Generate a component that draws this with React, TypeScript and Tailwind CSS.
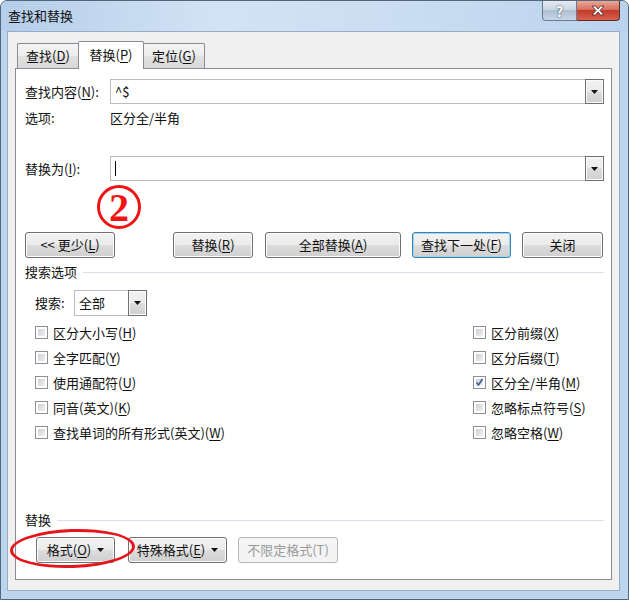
import React from 'react';

type Kids = { children?: React.ReactNode; className?: string };

const U = ({ children }: Kids) => (
  <span className="underline decoration-1 underline-offset-[2px]">{children}</span>
);

const Arrow = () => (
  <svg width="7" height="4" viewBox="0 0 7 4">
    <path d="M0 0h7L3.5 4z" fill="#111" />
  </svg>
);

const Combo = ({ children, className = '' }: Kids) => (
  <div className={`flex h-[25px] border border-[#bcbec6] bg-white ${className}`}>
    <div className="flex flex-1 items-center pl-[4px]">{children}</div>
    <div className="-my-px -mr-px flex w-[19px] items-center justify-center border border-[#707070] bg-[linear-gradient(#f2f2f2,#ebebeb_50%,#dddddd_50%,#cfcfcf)] shadow-[inset_0_0_0_1px_#fbfbfb]">
      <Arrow />
    </div>
  </div>
);

const Btn = ({
  children,
  className = '',
  variant = 'normal',
}: Kids & { variant?: 'normal' | 'default' | 'disabled' }) => {
  const look =
    variant === 'default'
      ? 'border-[#3c7fb1] bg-[linear-gradient(#f2f2f2,#ebebeb_50%,#dddddd_50%,#cfcfcf)] shadow-[inset_0_0_0_1px_#98d9f8]'
      : variant === 'disabled'
        ? 'border-[#b4b8bb] bg-[#f4f4f4] text-[#9a9a9a]'
        : 'border-[#707070] bg-[linear-gradient(#f2f2f2,#ebebeb_50%,#dddddd_50%,#cfcfcf)] shadow-[inset_0_0_0_1px_#fcfcfc]';
  return (
    <div className={`flex h-[26px] items-center justify-center gap-[6px] rounded-[3px] border ${look} ${className}`}>
      {children}
    </div>
  );
};

const Check = ({ children, checked = false }: Kids & { checked?: boolean }) => (
  <div className="flex h-[25px] items-center gap-[5px]">
    <span className="relative flex h-[13px] w-[13px] border border-[#8e8f8f] bg-white p-[2px]">
      <span className="h-full w-full bg-[linear-gradient(135deg,#cdd0d5,#f0f1f3)]" />
      {checked && (
        <svg className="absolute left-[1px] top-[1px]" width="9" height="9" viewBox="0 0 9 9">
          <path d="M1.5 4.5l2 2.5 4-6" fill="none" stroke="#3d5a9e" strokeWidth="1.6" />
        </svg>
      )}
    </span>
    <span>{children}</span>
  </div>
);

const Group = ({ children }: Kids) => (
  <div className="flex h-[16px] items-center gap-[6px]">
    <span>{children}</span>
    <span className="h-px flex-1 bg-[#d7e0e8]" />
  </div>
);

export default function App() {
  return (
    <div className="flex h-[600px] w-[629px] flex-col overflow-hidden rounded-t-[7px] border border-[#56667a] bg-[#bcd5ef] font-['Noto_Sans_CJK_SC','Liberation_Sans',sans-serif] text-[13px] leading-[16px] text-[#111]">
      {/* title bar */}
      <div className="flex h-[30px] shrink-0 items-start justify-between bg-[linear-gradient(90deg,#b5cee9,#d2e3f5_35%,#c8dcf1_70%,#bad3ed)]">
        <div className="pl-[7px] pt-[7px]">查找和替换</div>
        <div className="mr-[8px] flex">
          <div className="flex h-[20px] w-[35px] items-center justify-center rounded-bl-[4px] border border-t-0 border-[#6b7b8f] bg-[linear-gradient(#e4ebf3,#c9d5e2_50%,#aebfd2_50%,#c8d7e7)] text-[14px] font-bold text-white [text-shadow:0_0_2px_#1f2d40]">
            ?
          </div>
          <div className="flex h-[20px] w-[43px] items-center justify-center rounded-br-[4px] border border-l-0 border-t-0 border-[#5e2c25] bg-[linear-gradient(#e9a797,#d66a58_50%,#c23a2b_50%,#d8634e)]">
            <svg width="14" height="11" viewBox="0 0 14 11">
              <path
                d="M1 1h3.5L7 4l2.5-3H13L9 5.5 13 10H9.5L7 7l-2.5 3H1l4-4.5z"
                fill="#fff"
                stroke="#4a231d"
                strokeWidth="0.8"
              />
            </svg>
          </div>
        </div>
      </div>

      {/* client area */}
      <div className="ml-[6px] flex h-[560px] w-[613px] flex-col border border-[#9aacc2] bg-[#f0f0f0] px-[7px] pb-[10px] pt-[9px]">
        <div className="flex h-[27px] items-end">
          <div className="ml-[2px] flex h-[25px] w-[61px] items-center justify-center rounded-tl-[2px] border border-b-0 border-r-0 border-[#898c95] bg-[linear-gradient(#f4f4f4,#ececec_50%,#e2e2e2_50%,#d8d8d8)]">
            查找(<U>D</U>)
          </div>
          <div className="relative z-10 -mb-px flex h-[28px] w-[66px] items-center justify-center rounded-t-[2px] border border-b-0 border-[#898c95] bg-white pb-[2px]">
            替换(<U>P</U>)
          </div>
          <div className="flex h-[25px] w-[61px] items-center justify-center rounded-tr-[2px] border border-b-0 border-l-0 border-[#898c95] bg-[linear-gradient(#f4f4f4,#ececec_50%,#e2e2e2_50%,#d8d8d8)]">
            定位(<U>G</U>)
          </div>
        </div>

        <div className="flex flex-1 flex-col border border-[#898c95] bg-white pl-[9px] pr-[7px]">
          <div className="mt-[10px] flex h-[25px] items-center">
            <span className="w-[85px]">
              查找内容(<U>N</U>):
            </span>
            <Combo className="flex-1">^$</Combo>
          </div>
          <div className="mt-[6px] flex h-[16px] items-center">
            <span className="w-[85px]">选项:</span>
            <span>区分全/半角</span>
          </div>
          <div className="mt-[30px] flex h-[25px] items-center">
            <span className="w-[85px]">
              替换为(<U>I</U>):
            </span>
            <Combo className="flex-1">
              <span className="h-[15px] w-px bg-black" />
            </Combo>
          </div>

          <div className="ml-[72px] mt-[4px] flex h-[44px] w-[44px] items-center justify-center rounded-full border-[3px] border-[#f01414] pt-[2px] font-['Liberation_Serif',serif] text-[40px] font-bold leading-none text-[#f01414]">
            2
          </div>

          <div className="mt-[3px] flex">
            <Btn className="w-[90px]">
              <span>
                &lt;&lt; 更少(<U>L</U>)
              </span>
            </Btn>
            <Btn className="ml-[58px] w-[80px]">
              <span>
                替换(<U>R</U>)
              </span>
            </Btn>
            <Btn className="ml-[12px] w-[136px]">
              <span>
                全部替换(<U>A</U>)
              </span>
            </Btn>
            <Btn className="ml-[11px] w-[99px]" variant="default">
              <span>
                查找下一处(<U>F</U>)
              </span>
            </Btn>
            <Btn className="ml-[11px] w-[81px]">关闭</Btn>
          </div>

          <div className="mt-[6px]">
            <Group>搜索选项</Group>
          </div>

          <div className="mt-[10px] flex h-[26px] items-center pl-[10px]">
            <span className="w-[39px]">搜索:</span>
            <Combo className="h-[26px] w-[73px]">全部</Combo>
          </div>

          <div className="mt-[4px] flex">
            <div className="w-[448px] pl-[10px]">
              <Check>
                区分大小写(<U>H</U>)
              </Check>
              <Check>
                全字匹配(<U>Y</U>)
              </Check>
              <Check>
                使用通配符(<U>U</U>)
              </Check>
              <Check>
                同音(英文)(<U>K</U>)
              </Check>
              <Check>
                查找单词的所有形式(英文)(<U>W</U>)
              </Check>
            </div>
            <div className="flex-1">
              <Check>
                区分前缀(<U>X</U>)
              </Check>
              <Check>
                区分后缀(<U>T</U>)
              </Check>
              <Check checked>
                区分全/半角(<U>M</U>)
              </Check>
              <Check>
                忽略标点符号(<U>S</U>)
              </Check>
              <Check>
                忽略空格(<U>W</U>)
              </Check>
            </div>
          </div>

          <div className="mt-[67px]">
            <Group>替换</Group>
          </div>

          <div className="relative mt-[9px] flex pl-[11px]">
            <Btn className="h-[25px] w-[79px]">
              <span>
                格式(<U>O</U>)
              </span>
              <Arrow />
            </Btn>
            <Btn className="ml-[13px] h-[25px] w-[99px]">
              <span>
                特殊格式(<U>E</U>)
              </span>
              <Arrow />
            </Btn>
            <Btn className="ml-[11px] h-[25px] w-[100px]" variant="disabled">
              不限定格式(T)
            </Btn>
            <div className="absolute left-[-15px] top-[-8px] h-[39px] w-[125px] rotate-[-2deg] rounded-[50%] border-[3px] border-[#e8141b]" />
          </div>
        </div>
      </div>
    </div>
  );
}
